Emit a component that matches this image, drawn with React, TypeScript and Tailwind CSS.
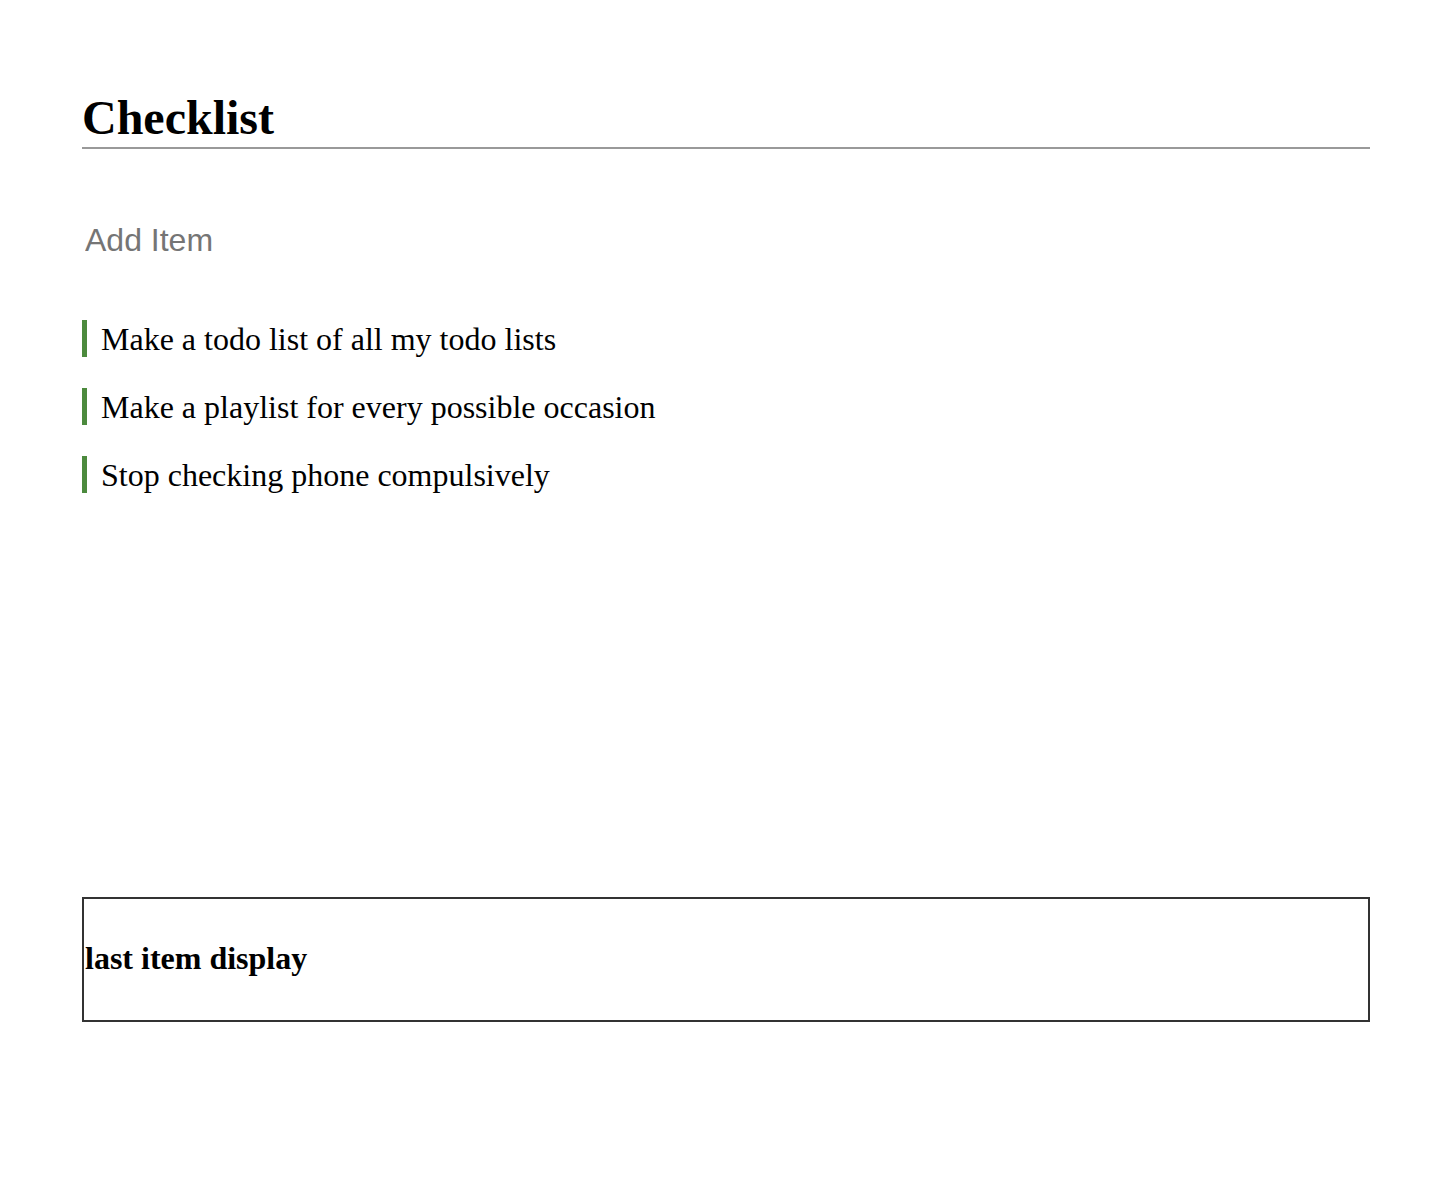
const items = [
  "Make a todo list of all my todo lists",
  "Make a playlist for every possible occasion",
  "Stop checking phone compulsively",
];

export default function App() {
  return (
    <div
      className="min-h-screen bg-white pl-[82px] pr-[84px] pt-[94px] text-black"
      style={{ fontFamily: '"Liberation Serif", "Times New Roman", serif' }}
    >
      {/* Header */}
      <h1 className="border-b-2 border-[#999] pb-[5px] text-[48px] font-bold leading-[48px]">
        Checklist
      </h1>

      {/* Add item input */}
      <input
        type="text"
        placeholder="Add Item"
        className="mt-[75px] block h-[32px] w-[400px] bg-transparent px-[3px] text-[32px] leading-[32px] text-black outline-none placeholder:text-[#757575]"
        style={{ fontFamily: '"Liberation Sans", Arial, sans-serif' }}
      />

      {/* List */}
      <ul className="mt-[64px] flex flex-col gap-[31px]">
        {items.map((item) => (
          <li
            key={item}
            className="h-[37px] border-l-[5px] border-[#4c8a3d] pl-[14px] text-[32px] leading-[38px]"
          >
            {item}
          </li>
        ))}
      </ul>

      {/* Last item display */}
      <div className="mt-[404px] flex h-[125px] items-center border-2 border-[#333]">
        <h3 className="pb-[4px] pl-[1px] text-[32px] font-bold leading-[32px]">last item display</h3>
      </div>
    </div>
  );
}
